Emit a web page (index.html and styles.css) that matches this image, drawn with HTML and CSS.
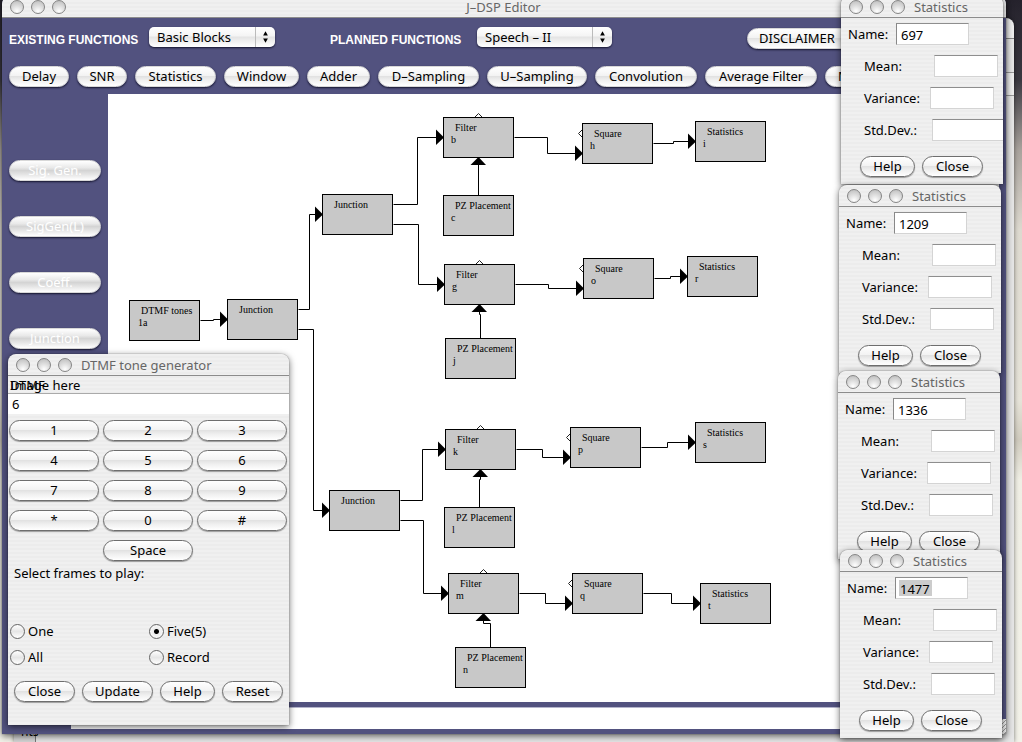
FILE: index.html
```html
<!DOCTYPE html>
<html lang="en">
<head>
<meta charset="utf-8">
<title>J-DSP Editor</title>
<link rel="stylesheet" href="styles.css">
</head>
<body>
<main class="desktop">
  <div class="backdrop"><span class="backdrop-tab">nts</span></div>

  <section class="window editor">
    <header class="titlebar">
      <span class="lights"><i></i><i></i><i></i></span>
      <h1 class="title">J–DSP Editor</h1>
    </header>
    <div class="pickers">
      <label class="picker-label" for="existing">EXISTING FUNCTIONS</label>
      <span class="popup popup-existing">
        <select id="existing"><option>Basic Blocks</option></select>
        <svg class="popup-arrows" viewBox="0 0 20 20"><path d="M7.500 8.500L10 4L12.500 8.500zM7.500 11.500L10 16L12.500 11.500z"/></svg>
      </span>
      <label class="picker-label picker-planned" for="planned">PLANNED FUNCTIONS</label>
      <span class="popup popup-planned">
        <select id="planned"><option>Speech – II</option></select>
        <svg class="popup-arrows" viewBox="0 0 20 20"><path d="M7.500 8.500L10 4L12.500 8.500zM7.500 11.500L10 16L12.500 11.500z"/></svg>
      </span>
      <button class="pill disclaimer" type="button">DISCLAIMER</button>
    </div>
    <div class="functions">
      <button class="pill" type="button">Delay</button>
      <button class="pill" type="button">SNR</button>
      <button class="pill" type="button">Statistics</button>
      <button class="pill" type="button">Window</button>
      <button class="pill" type="button">Adder</button>
      <button class="pill" type="button">D–Sampling</button>
      <button class="pill" type="button">U–Sampling</button>
      <button class="pill" type="button">Convolution</button>
      <button class="pill" type="button">Average Filter</button>
      <button class="pill leading" type="button">M</button>
    </div>
    <div class="workspace">
      <nav class="sidebar">
        <button class="pill faded" type="button">Sig. Gen.</button>
        <button class="pill faded" type="button">SigGen(L)</button>
        <button class="pill faded" type="button">Coeff.</button>
        <button class="pill faded" type="button">Junction</button>
      </nav>
      <div class="canvas">
        <svg class="diagram" viewBox="108 94 733 608" width="733" height="608">
          <defs>
            <rect id="box" x="0.5" y="0.5" width="70" height="40"/>
            <path id="right" d="M0 -7.500L8 0.500L0 8z"/>
            <path id="up" d="M-7.500 8L0.500 0L8 8z"/>
            <path id="port-top" d="M31.500 0.500L35.500 -3.500L39.500 0.500"/>
            <path id="port-left" d="M0.500 6.500L-3.500 10.500L0.500 14.500"/>
          </defs>
          <g class="wires" transform="translate(0.5 0.5)">
            <path d="M200 320H213V319H227M298 309H309V214H322M298 329H313V510H329"/>
            <path d="M393 204H417V137H443M393 224H418V284H444"/>
            <path d="M514 137H547V153H582M653 143H673V141H695M478 195V160"/>
            <path d="M515 284H548V288H583M654 278H670V276H687M480 338V314H479V307"/>
            <path d="M400 500H422V449H445M400 520H423V593H448"/>
            <path d="M516 449H542V457H570M641 447H667V442H695M479 507V479H480V472"/>
            <path d="M519 593H545V603H572M643 593H671V603H700M490 647V623H483V616"/>
          </g>
          <g class="arrows">
            <use href="#right" x="220" y="319"/><use href="#right" x="315" y="214"/><use href="#right" x="322" y="510"/>
            <use href="#right" x="436" y="137"/><use href="#right" x="437" y="284"/><use href="#right" x="438" y="449"/><use href="#right" x="441" y="593"/>
            <use href="#right" x="575" y="153"/><use href="#right" x="576" y="288"/><use href="#right" x="563" y="457"/><use href="#right" x="565" y="603"/>
            <use href="#right" x="688" y="141"/><use href="#right" x="680" y="276"/><use href="#right" x="688" y="442"/><use href="#right" x="693" y="603"/>
            <use href="#up" x="478" y="157"/><use href="#up" x="479" y="304"/><use href="#up" x="480" y="469"/><use href="#up" x="483" y="613"/>
          </g>
          <g class="nodes">
            <g transform="translate(129 300)"><use href="#box"/><text x="12" y="14">DTMF tones</text><text x="9" y="26">1a</text></g>
            <g transform="translate(227 299)"><use href="#box"/><text x="12" y="14">Junction</text></g>
            <g transform="translate(322 194)"><use href="#box"/><text x="12" y="14">Junction</text></g>
            <g transform="translate(329 490)"><use href="#box"/><text x="12" y="14">Junction</text></g>
            <g transform="translate(443 117)"><use href="#port-top"/><use href="#box"/><text x="12" y="14">Filter</text><text x="8" y="26">b</text></g>
            <g transform="translate(444 264)"><use href="#port-top"/><use href="#box"/><text x="12" y="14">Filter</text><text x="8" y="26">g</text></g>
            <g transform="translate(445 429)"><use href="#port-top"/><use href="#box"/><text x="12" y="14">Filter</text><text x="8" y="26">k</text></g>
            <g transform="translate(448 573)"><use href="#port-top"/><use href="#box"/><text x="12" y="14">Filter</text><text x="8" y="26">m</text></g>
            <g transform="translate(443 195)"><use href="#box"/><text x="12" y="14">PZ Placement</text><text x="8" y="26">c</text></g>
            <g transform="translate(445 338)"><use href="#box"/><text x="12" y="14">PZ Placement</text><text x="8" y="26">j</text></g>
            <g transform="translate(444 507)"><use href="#box"/><text x="12" y="14">PZ Placement</text><text x="8" y="26">l</text></g>
            <g transform="translate(455 647)"><use href="#box"/><text x="12" y="14">PZ Placement</text><text x="8" y="26">n</text></g>
            <g transform="translate(582 123)"><use href="#port-left"/><use href="#box"/><text x="12" y="14">Square</text><text x="8" y="26">h</text></g>
            <g transform="translate(583 258)"><use href="#port-left"/><use href="#box"/><text x="12" y="14">Square</text><text x="8" y="26">o</text></g>
            <g transform="translate(570 427)"><use href="#port-left"/><use href="#box"/><text x="12" y="14">Square</text><text x="8" y="26">p</text></g>
            <g transform="translate(572 573)"><use href="#port-left"/><use href="#box"/><text x="12" y="14">Square</text><text x="8" y="26">q</text></g>
            <g transform="translate(695 121)"><use href="#box"/><text x="12" y="14">Statistics</text><text x="8" y="26">i</text></g>
            <g transform="translate(687 256)"><use href="#box"/><text x="12" y="14">Statistics</text><text x="8" y="26">r</text></g>
            <g transform="translate(695 422)"><use href="#box"/><text x="12" y="14">Statistics</text><text x="8" y="26">s</text></g>
            <g transform="translate(700 583)"><use href="#box"/><text x="12" y="14">Statistics</text><text x="8" y="26">t</text></g>
          </g>
        </svg>
      </div>
    </div>
    <footer class="status">
      <input class="status-field" type="text" aria-label="Status">
      <span class="grip"></span>
    </footer>
  </section>

  <section class="window dtmf">
    <header class="titlebar">
      <span class="lights"><i></i><i></i><i></i></span>
      <h2 class="title">DTMF tone generator</h2>
    </header>
    <div class="banner"><span>Image here</span><span class="banner-over">DTMF</span></div>
    <input class="digits" type="text" value="6" aria-label="Digits">
    <div class="keypad">
      <button class="pill" type="button">1</button>
      <button class="pill" type="button">2</button>
      <button class="pill" type="button">3</button>
      <button class="pill" type="button">4</button>
      <button class="pill" type="button">5</button>
      <button class="pill" type="button">6</button>
      <button class="pill" type="button">7</button>
      <button class="pill" type="button">8</button>
      <button class="pill" type="button">9</button>
      <button class="pill" type="button">*</button>
      <button class="pill" type="button">0</button>
      <button class="pill" type="button">#</button>
      <button class="pill space" type="button">Space</button>
    </div>
    <p class="prompt">Select frames to play:</p>
    <div class="choices">
      <label class="choice"><input type="radio" name="frames">One</label>
      <label class="choice"><input type="radio" name="frames" checked>Five(5)</label>
      <label class="choice"><input type="radio" name="frames">All</label>
      <label class="choice"><input type="radio" name="frames">Record</label>
    </div>
    <div class="actions">
      <button class="pill medium" type="button">Close</button>
      <button class="pill wide" type="button">Update</button>
      <button class="pill small" type="button">Help</button>
      <button class="pill medium" type="button">Reset</button>
    </div>
  </section>

  <section class="window stats stats-a">
    <header class="titlebar"><span class="lights"><i></i><i></i><i></i></span><h2 class="title">Statistics</h2></header>
    <div class="fields">
      <label class="field name">Name:<input type="text" value="697"></label>
      <label class="field mean">Mean:<input type="text"></label>
      <label class="field variance">Variance:<input type="text"></label>
      <label class="field deviation overflow">Std.Dev.:<input type="text"></label>
    </div>
    <div class="actions"><button class="pill small" type="button">Help</button><button class="pill medium" type="button">Close</button></div>
  </section>

  <section class="window stats stats-b">
    <header class="titlebar"><span class="lights"><i></i><i></i><i></i></span><h2 class="title">Statistics</h2></header>
    <div class="fields">
      <label class="field name">Name:<input type="text" value="1209"></label>
      <label class="field mean">Mean:<input type="text"></label>
      <label class="field variance">Variance:<input type="text"></label>
      <label class="field deviation">Std.Dev.:<input type="text"></label>
    </div>
    <div class="actions"><button class="pill small" type="button">Help</button><button class="pill medium" type="button">Close</button></div>
  </section>

  <section class="window stats stats-c">
    <header class="titlebar"><span class="lights"><i></i><i></i><i></i></span><h2 class="title">Statistics</h2></header>
    <div class="fields">
      <label class="field name">Name:<input type="text" value="1336"></label>
      <label class="field mean">Mean:<input type="text"></label>
      <label class="field variance">Variance:<input type="text"></label>
      <label class="field deviation">Std.Dev.:<input type="text"></label>
    </div>
    <div class="actions"><button class="pill small" type="button">Help</button><button class="pill medium" type="button">Close</button></div>
  </section>

  <section class="window stats stats-d">
    <header class="titlebar"><span class="lights"><i></i><i></i><i></i></span><h2 class="title">Statistics</h2></header>
    <div class="fields">
      <label class="field name">Name:<input class="selected" type="text" value="1477"></label>
      <label class="field mean">Mean:<input type="text"></label>
      <label class="field variance">Variance:<input type="text"></label>
      <label class="field deviation">Std.Dev.:<input type="text"></label>
    </div>
    <div class="actions"><button class="pill small" type="button">Help</button><button class="pill medium" type="button">Close</button></div>
  </section>
</main>
</body>
</html>
```

FILE: styles.css
```css
* { box-sizing: border-box; }

body {
  margin: 0;
  font: 13px/16px "Noto Sans", "Open Sans", sans-serif;
  color: #000;
}

button, input, select { font: inherit; color: inherit; margin: 0; }
h1, h2, p { margin: 0; font: inherit; }

.desktop {
  position: relative;
  height: 100vh;
  overflow: hidden;
  background: linear-gradient(#25222c 0, #3a3840 80px, #a8a29c 150px, #ddd9cf 230px, #e6e3d8 400px, #cfcabd 440px, #efeee4 480px, #f2f1e8 100%);
}

.backdrop {
  position: absolute;
  inset: 18px 8px 0 14px;
  border-radius: 0 8px 0 0;
  background: linear-gradient(#eee 0 20px, #888 20px 21px, #e6e6e6 21px 54px, #999 54px 55px, #eee 55px 77px, #999 77px 78px, #e6e6e6 78px);
  box-shadow: 0 0 4px rgba(0, 0, 0, .5);
  display: flex;
  align-items: flex-end;
}

.backdrop-tab {
  width: 22px;
  padding-left: 7px;
  height: 18px;
  border-right: 1px solid #777;
  background: #d4d4d4;
  font-size: 12px;
  line-height: 16px;
}

.window {
  position: absolute;
  background: repeating-linear-gradient(#f0f0f0 0 2px, #ececec 2px 4px);
  border-radius: 8px 8px 0 0;
  box-shadow: 0 2px 7px rgba(0, 0, 0, .6), 0 0 1px rgba(0, 0, 0, .7);
}

.titlebar {
  display: flex;
  align-items: center;
  height: 22px;
  padding-left: 8px;
  gap: 9px;
  border-bottom: 1px solid #8c8c8c;
}

.title { color: #666; white-space: nowrap; }
.lights { display: flex; gap: 7px; }

.lights i {
  width: 14px;
  height: 14px;
  border: 1px solid #858585;
  border-radius: 50%;
  background: radial-gradient(circle at 50% 85%, #fff 0, #e2e2e2 40%, #b9b9b9 100%);
}

.pill {
  height: 21px;
  padding: 0;
  border: 1px solid #6e6e6e;
  border-radius: 11px;
  background: linear-gradient(#fff 0, #f3f3f3 45%, #e2e2e2 50%, #f0f0f0 70%, #fff 100%);
  box-shadow: 0 1px 1px rgba(0, 0, 0, .35);
  line-height: 17px;
  text-align: center;
  white-space: nowrap;
  overflow: hidden;
}

.small { width: 55px; }
.medium { width: 61px; }
.wide { width: 71px; }

/* Editor */
.editor {
  inset: -4px 16px 8px 2px;
  display: flex;
  flex-direction: column;
  background: #52527f;
}

.editor > .titlebar {
  position: relative;
  flex: none;
  border-radius: 8px 8px 0 0;
  background: repeating-linear-gradient(#f0f0f0 0 2px, #ececec 2px 4px);
}

.editor > .titlebar .title { flex: 1; padding-right: 74px; text-align: center; }
.editor .pill { border-color: #d8d8d8; box-shadow: 0 1px 2px #15152e; }

.pickers {
  display: flex;
  align-items: center;
  height: 41px;
  flex: none;
  padding: 0 0 4px 7px;
  overflow: hidden;
}

.picker-label {
  width: 140px;
  padding-top: 6px;
  color: #fff;
  font: bold 12px/16px "Liberation Sans", Arial, sans-serif;
  white-space: nowrap;
}

.picker-planned { width: 147px; margin-left: 55px; }

.popup { position: relative; height: 20px; flex: none; }
.popup-existing { width: 126px; }
.popup-planned { width: 135px; }

.popup select {
  appearance: none;
  width: 100%;
  height: 20px;
  padding: 0 24px 0 8px;
  border: 0;
  border-radius: 5px;
  background: linear-gradient(#fff 0, #f4f4f4 45%, #e4e4e4 50%, #fff 100%);
  box-shadow: 0 1px 2px #15152e;
  line-height: 18px;
}

.popup-arrows {
  position: absolute;
  top: 0;
  right: 0;
  width: 20px;
  height: 20px;
  border-left: 1px solid #bbb;
  pointer-events: none;
}

.disclaimer { width: 110px; flex: none; margin: 4px 0 0 135px; padding-right: 10px; }

.functions {
  display: grid;
  flex: none;
  grid-template-columns: 60px 50px 81px 75px 63px 101px 100px 102px 112px 110px;
  column-gap: 8px;
  height: 35px;
  padding: 7px 0 0 7px;
  overflow: hidden;
}

.leading { padding-left: 12px; text-align: left; }

.workspace { display: flex; flex: 1; min-height: 0; padding-right: 7px; }

.sidebar {
  display: flex;
  flex: none;
  flex-direction: column;
  gap: 35px;
  width: 106px;
  padding: 66px 7px 0;
}

.pill.faded { color: #fff; background: linear-gradient(#fff 0, #e9e9e9 35%, #d4d4d4 50%, #e4e4e4 70%, #fff 100%); }

.canvas { flex: 1; min-width: 0; overflow: hidden; background: #fff; }
.diagram { display: block; }
.wires { fill: none; stroke: #000; }
.diagram #box { fill: #c8c8c8; stroke: #000; }
.diagram #port-top, .diagram #port-left { fill: #fff; stroke: #222; }
.nodes text { font: 10px "Liberation Serif", "Times New Roman", serif; }

.status {
  display: flex;
  flex: none;
  height: 32px;
  padding: 5px 0 0 69px;
}

.status-field {
  flex: 1;
  min-width: 0;
  height: 22px;
  border: 0;
  border-top: 1px solid #b5b5cc;
  padding: 0 4px;
  background: #fff;
}

.grip {
  align-self: flex-end;
  width: 7px;
  height: 15px;
  background: repeating-linear-gradient(135deg, #eee 0 2px, #999 2px 3px);
}

/* Tone generator */
.dtmf { left: 8px; top: 354px; width: 281px; height: 371px; }

.banner {
  position: relative;
  height: 18px;
  padding: 1px 0 0 2px;
  border-bottom: 1px solid #aaa;
}

.banner-over { position: absolute; left: 2px; top: 1px; }

.digits {
  display: block;
  width: 100%;
  height: 20px;
  padding: 0 4px;
  border: 0;
  background: #fff;
}

.keypad {
  display: grid;
  grid-template-columns: repeat(3, 1fr);
  gap: 9px 4px;
  padding: 6px 2px 0 1px;
}

.space { grid-column: 2; }
.prompt { padding: 4px 6px 0; }

.choices {
  display: grid;
  grid-template-columns: 139px 1fr;
  row-gap: 10px;
  padding-top: 42px;
  padding-left: 2px;
}

.choice { display: flex; align-items: center; gap: 3px; height: 16px; }

.choice input {
  appearance: none;
  width: 15px;
  height: 15px;
  border: 1px solid #666;
  border-radius: 50%;
  background: linear-gradient(#fff, #e6e6e6 50%, #fff);
}

.choice input:checked { background: radial-gradient(circle, #000 0 2px, #eee 3px, #fff 100%); }

.actions { display: flex; gap: 7px; }
.dtmf .actions { padding: 16px 6px 0; }

/* Statistics dialogs */
.stats { width: 162px; height: 188px; }
.stats-a { left: 841px; top: -4px; }
.stats-b { left: 839px; top: 185px; }
.stats-c { left: 838px; top: 371px; }
.stats-d { left: 840px; top: 550px; }

.fields { display: flex; flex-direction: column; gap: 10px; padding-top: 5px; overflow: hidden; }
.field { display: flex; align-items: center; justify-content: space-between; padding-left: 23px; }
.name { padding: 0 34px 0 7px; }
.mean { padding-right: 5px; }
.variance { padding-right: 9px; }
.deviation { padding-right: 7px; }

.field input {
  flex: none;
  width: 64px;
  height: 22px;
  padding: 2px 4px 0;
  border: 1px solid #d4d4d4;
  border-top-color: #8e8e8e;
  background: #fff;
}

.name input { width: 73px; border-left-color: #888; }
.name .selected { background: linear-gradient(#ccc, #ccc) 3px 2px / 33px 16px no-repeat #fff; }

.overflow { padding-right: 0; }
.overflow input { width: 71px; border-right: 0; }

.stats .actions { padding: 15px 0 0 19px; }
```
